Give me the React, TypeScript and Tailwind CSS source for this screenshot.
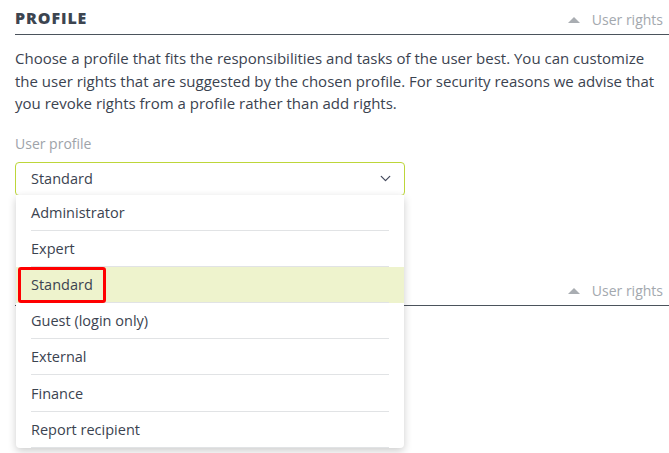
import { ChevronDown } from "lucide-react";

const profiles = [
  "Administrator",
  "Expert",
  "Standard",
  "Guest (login only)",
  "External",
  "Finance",
  "Report recipient",
];

function SectionHeader({ title }: { title?: string }) {
  return (
    <div className="flex items-end justify-between border-b border-[#4b535c] pb-[7px] h-[35px]">
      <h2 className="text-[16px] font-extrabold tracking-[0.9px] text-[#3c4550] leading-none mb-[1px]">{title}</h2>
      <button className="flex items-center gap-[12px] text-[14px] text-[#a3a8ae] leading-none mr-[6px]">
        <span className="w-0 h-0 border-x-[6px] border-x-transparent border-b-[6px] border-b-[#a9adb2]" />
        User rights
      </button>
    </div>
  );
}

export default function App() {
  const selected = "Standard";

  return (
    <div className="min-h-screen bg-white pl-[15px] font-['Open_Sans',sans-serif] text-[#3b4350] overflow-hidden">
      <section>
        <SectionHeader title="PROFILE" />
        <p className="mt-[12px] text-[15px] leading-[22.5px] pr-[6px]">
          Choose a profile that fits the responsibilities and tasks of the user best. You can customize the user rights
          that are suggested by the chosen profile. For security reasons we advise that you revoke rights from a profile
          rather than add rights.
        </p>

        <label className="block mt-[19px] text-[14px] text-[#9ea3a9] leading-[20px]">User profile</label>

        <div className="relative mt-[8px] w-[390px]">
          <div className="flex items-center justify-between h-[34px] border border-[#bdd63a] rounded-[4px] pl-[15px] pr-[10px]">
            <span className="text-[14.5px]">{selected}</span>
            <ChevronDown className="w-[17px] h-[17px] text-[#454a5e]" strokeWidth={1.8} />
          </div>

          <ul className="absolute left-[1px] right-[1px] top-[33px] z-10 bg-white rounded-b-[4px] shadow-[0_3px_9px_rgba(0,0,0,0.2)]">
            {profiles.map((p) => (
              <li
                key={p}
                className={`relative h-[36.2px] ${p === selected ? "bg-[#eef3cd]" : ""}`}
              >
                <div className="mx-[15px] h-full flex items-center border-b border-[#e1e3e5] text-[14.5px] pt-[1px]">
                  {p}
                </div>
                {p === selected && (
                  <span className="absolute left-[2px] top-0 w-[88px] h-[36px] border-[3px] border-[#ff0000] rounded-[3px]" />
                )}
              </li>
            ))}
          </ul>
        </div>
      </section>

      <section className="mt-[75px]">
        <SectionHeader />
      </section>
    </div>
  );
}
